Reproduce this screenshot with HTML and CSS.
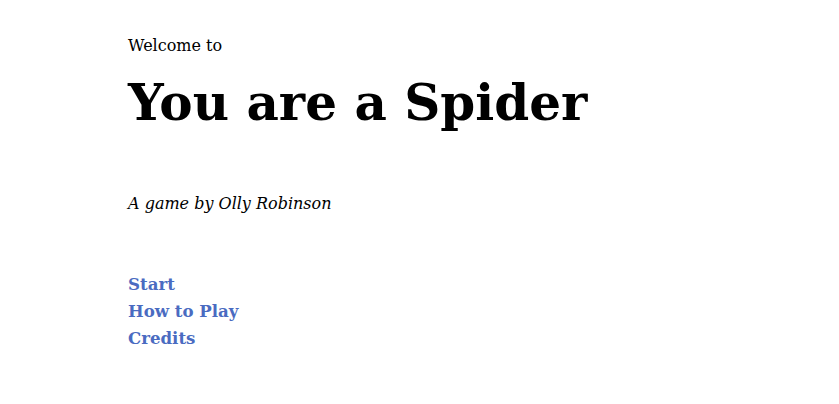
FILE: index.html
```html
<!DOCTYPE html>
<html>
<head>
<meta charset="utf-8">
<link rel="stylesheet" href="styles.css">
</head>
<body>
<main class="page">
  <p class="welcome">Welcome to</p>
  <h1 class="title">You are a Spider</h1>
  <p class="byline">A game by Olly Robinson</p>
  <nav class="menu">
    <a class="menu-link" href="#">Start</a>
    <a class="menu-link" href="#">How to Play</a>
    <a class="menu-link" href="#">Credits</a>
  </nav>
</main>
</body>
</html>
```

FILE: styles.css
```css
html, body {
  margin: 0;
  padding: 0;
  background: #fff;
}
.page {
  font-family: "DejaVu Serif", "Liberation Serif", serif;
  color: #000;
  padding: 34px 0 0 128px;
  display: flex;
  flex-direction: column;
  align-items: flex-start;
}
.welcome {
  margin: 0;
  font-size: 16px;
  line-height: 24px;
}
.title {
  margin: 14px 0 0 0;
  font-size: 50px;
  line-height: 62px;
  font-weight: bold;
}
.byline {
  margin: 58px 0 0 0;
  font-size: 16px;
  line-height: 24px;
  font-style: italic;
}
.menu {
  margin-top: 55px;
  display: flex;
  flex-direction: column;
}
.menu-link {
  font-size: 16.6px;
  line-height: 27px;
  font-weight: bold;
  color: #4a6bc1;
  text-decoration: none;
}
```
